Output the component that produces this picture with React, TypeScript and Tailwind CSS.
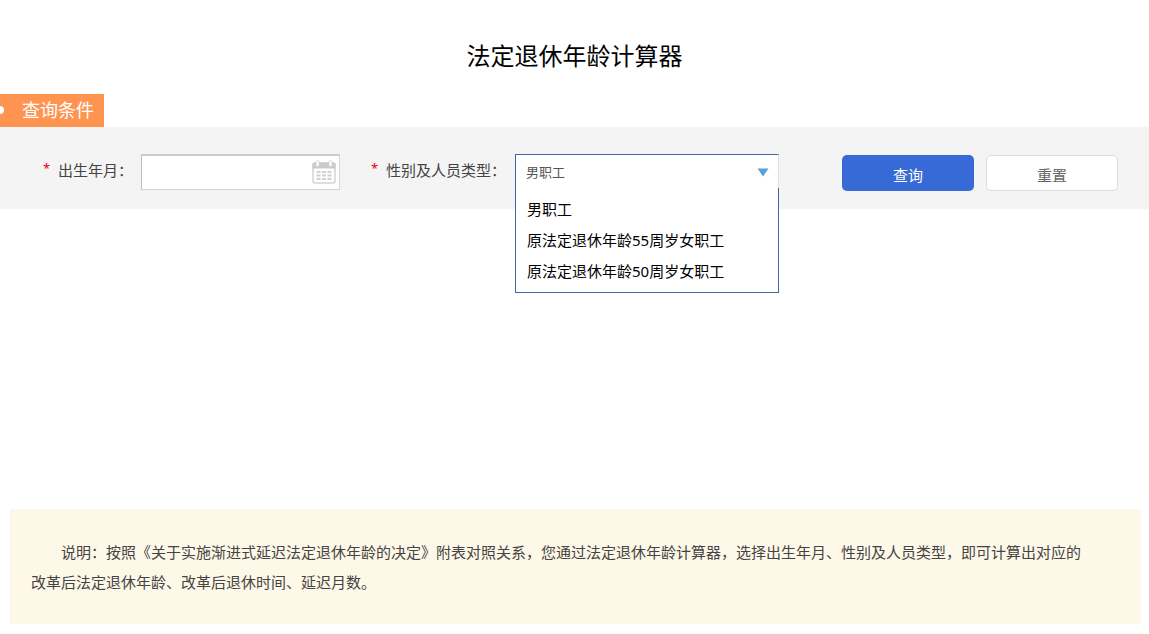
import { useState } from "react";

const staffTypes = ["男职工", "原法定退休年龄55周岁女职工", "原法定退休年龄50周岁女职工"];

function CalendarIcon() {
  return (
    <svg width="24" height="24" viewBox="0 0 24 24" aria-hidden="true">
      <rect x="1" y="3" width="22" height="20" rx="2" fill="#fff" stroke="#d4d4d4" strokeWidth="1.5" />
      <path d="M0.500 8.500V4.500a2 2 0 0 1 2-2h19a2 2 0 0 1 2 2v4z" fill="#cbcbcb" />
      <rect x="4" y="0.500" width="3" height="6" rx="1.500" fill="#fff" stroke="#d4d4d4" strokeWidth="0.8" />
      <rect x="17" y="0.500" width="3" height="6" rx="1.500" fill="#fff" stroke="#d4d4d4" strokeWidth="0.8" />
      <g fill="#d0d0d0">
        <path d="M4.500 11h4v2h-4zM10 11h4v2h-4zM15.500 11h4v2h-4z" />
        <path d="M4.500 14.500h4v2h-4zM10 14.500h4v2h-4zM15.500 14.500h4v2h-4z" />
        <path d="M4.500 18h4v2h-4zM10 18h4v2h-4zM15.500 18h4v2h-4z" />
      </g>
    </svg>
  );
}

function FieldLabel({ htmlFor, text }: { htmlFor: string; text: string }) {
  return (
    <label htmlFor={htmlFor} className="flex gap-2 pb-1 whitespace-nowrap">
      <span className="w-[7px] text-[13px] text-[#e60012]">*</span>
      {text}
    </label>
  );
}

export default function App() {
  const [birth, setBirth] = useState("");
  const [type, setType] = useState(staffTypes[0]);
  const [open, setOpen] = useState(true);

  const reset = () => {
    setBirth("");
    setType(staffTypes[0]);
  };

  const choose = (item: string) => {
    setType(item);
    setOpen(false);
  };

  return (
    <div className="bg-white text-[15px] text-[#444] font-['Noto_Sans','Noto_Sans_CJK_SC',sans-serif]">
      <h1 className="pt-[39px] pb-[21px] text-center text-2xl leading-[34px] text-black">法定退休年龄计算器</h1>

      <h2 className="flex h-[33px] w-[104px] items-center gap-4 overflow-hidden bg-[#ff9451] pb-0.5 text-lg text-white">
        <span className="-ml-1 size-2 shrink-0 rounded-full bg-white" />
        <span className="ml-0.5 whitespace-nowrap">查询条件</span>
      </h2>

      <form
        className="flex h-[82px] items-center bg-[#f4f4f4] pt-2 pr-[31px] pl-[43px]"
        onSubmit={(e) => e.preventDefault()}
      >
        <div className="flex w-[297px] shrink-0 items-center justify-between">
          <FieldLabel htmlFor="birth" text="出生年月：" />
          <div className="relative">
            <input
              id="birth"
              type="text"
              value={birth}
              onChange={(e) => setBirth(e.target.value)}
              className="block h-9 w-[199px] border border-t-2 border-[#d4d4d4] border-t-[#ccc] border-l-[#bbb] bg-white pr-8 pl-2 outline-none"
            />
            <span className="pointer-events-none absolute top-1.5 right-1">
              <CalendarIcon />
            </span>
          </div>
        </div>

        <div className="ml-[31px] flex w-[408px] shrink-0 items-center justify-between">
          <FieldLabel htmlFor="staff-type" text="性别及人员类型：" />
          <div className="relative">
            <select
              id="staff-type"
              value={type}
              onChange={(e) => setType(e.target.value)}
              className="block h-9 w-[264px] appearance-none border border-t-[#4066a8] border-r-[#ddd] border-b-white border-l-[#4066a8] bg-white pt-0.5 pl-2.5 text-[13px] text-[#555] outline-none"
            >
              {staffTypes.map((item) => (
                <option key={item}>{item}</option>
              ))}
            </select>
            <svg
              className="pointer-events-none absolute top-3.5 right-2.5"
              width="12"
              height="9"
              viewBox="0 0 12 9"
              aria-hidden="true"
            >
              <path d="M0.500 0.500h11L6 8.500z" fill="#55a1d8" />
            </svg>
            {open && (
              <ul
                role="listbox"
                className="absolute top-[34px] left-0 z-10 w-full border border-t-0 border-[#4066a8] bg-white pt-1.5 pb-[5px] text-black"
              >
                {staffTypes.map((item) => (
                  <li
                    key={item}
                    role="option"
                    aria-selected={item === type}
                    onClick={() => choose(item)}
                    className="cursor-pointer pl-[11px] leading-[31px] whitespace-nowrap hover:bg-[#eef4fc]"
                  >
                    {item}
                  </li>
                ))}
              </ul>
            )}
          </div>
        </div>

        <div className="ml-auto flex gap-3 pt-0.5">
          <button type="submit" className="h-9 w-[132px] rounded-[5px] bg-[#376ad6] pt-1 text-white">
            查询
          </button>
          <button
            type="button"
            onClick={reset}
            className="h-9 w-[132px] rounded-[5px] border border-[#ddd] bg-white pt-1 text-[#666]"
          >
            重置
          </button>
        </div>
      </form>

      <div className="h-[300px]" />

      <p className="mr-2 ml-2.5 bg-[#fef8e8] pt-7 pr-[50px] pb-[27px] pl-[21px] indent-[2em] leading-[30px]">
        说明：按照《关于实施渐进式延迟法定退休年龄的决定》附表对照关系，您通过法定退休年龄计算器，选择出生年月、性别及人员类型，即可计算出对应的改革后法定退休年龄、改革后退休时间、延迟月数。
      </p>
    </div>
  );
}
